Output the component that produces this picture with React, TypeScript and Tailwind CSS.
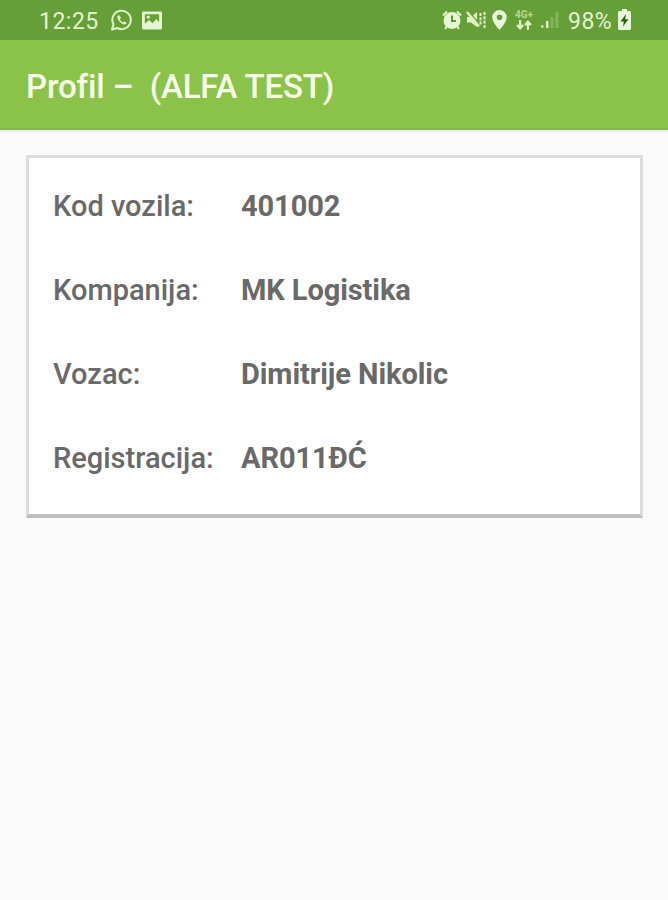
import React from "react";

const rows = [
  { label: "Kod vozila:", value: "401002" },
  { label: "Kompanija:", value: "MK Logistika" },
  { label: "Vozac:", value: "Dimitrije Nikolic" },
  { label: "Registracija:", value: "AR011ĐĆ" },
];

function WhatsAppIcon() {
  return (
    <svg className="ml-[10px] h-[24px] w-[24px]" viewBox="0 0 24 24" fill="none" stroke="#dff3c6">
      <path d="M2 21.5l1.5-5.2A9.2 9.2 0 1 1 7.2 20z" strokeWidth="2" strokeLinejoin="round" />
      <path
        d="M8.2 7.2c-2 1.6-.6 4.4 1.7 6.7 2.2 2.2 4.9 3.5 6.5 1.5l-.1-1-2.2-1.1-1.2 1.1c-1.4-.6-2.5-1.7-3.1-3.1l1-1.2-1-2.7z"
        fill="#dff3c6"
        stroke="none"
      />
    </svg>
  );
}

function PictureIcon() {
  return (
    <svg className="ml-[8px] h-[19px] w-[20px]" viewBox="0 0 21 19">
      <path
        fillRule="evenodd"
        fill="#e6f6d2"
        d="M1.5 0h18A1.5 1.5 0 0 1 21 1.5v16a1.5 1.5 0 0 1-1.5 1.5h-18A1.5 1.5 0 0 1 0 17.5v-16A1.5 1.5 0 0 1 1.5 0zM3 3v10l4.500-4 3.500 3.500 4-4.500 3 3V3zM5 4.500h3v3H5z"
      />
    </svg>
  );
}

function AlarmIcon() {
  return (
    <svg className="h-[20px] w-[20px]" viewBox="0 0 20 20" fill="none">
      <circle cx="10" cy="10.5" r="8.5" fill="#e6f6d2" />
      <path d="M1 5.5L5 1.5M19 5.5L15 1.5M5 16l-2 3M15 16l2 3" stroke="#e6f6d2" strokeWidth="2" />
      <path d="M10 5.5v5.5h4" stroke="#5f9a35" strokeWidth="2" />
    </svg>
  );
}

function VibrateMuteIcon() {
  return (
    <svg className="ml-[4px] h-[20px] w-[20px]" viewBox="0 0 20 20" fill="none">
      <path d="M1 7h4l6-5v15l-6-4.5H1z" fill="#dff3c6" />
      <path d="M3 2L13 13.500" stroke="#649f37" strokeWidth="1.5" />
      <path d="M1 2L13 16.500" stroke="#dff3c6" strokeWidth="2.4" />
      <path d="M14.500 3v12M18.500 2v16" stroke="#dff3c6" strokeWidth="2" strokeDasharray="3 1.3" />
    </svg>
  );
}

function PinIcon() {
  return (
    <svg className="ml-[6px] h-[20px] w-[15px]" viewBox="0 0 15 20">
      <path
        fillRule="evenodd"
        fill="#e9f8d8"
        d="M7.5 0A7.3 7.3 0 0 0 .2 7.3C.2 12.5 7.5 20 7.5 20s7.3-7.5 7.3-12.7A7.3 7.3 0 0 0 7.5 0zm0 4.500a2.800 2.800 0 1 1 0 5.600 2.800 2.800 0 0 1 0-5.600z"
      />
    </svg>
  );
}

function NetworkIcon() {
  return (
    <div className="ml-[7px] flex h-[20px] w-[20px] flex-col items-center">
      <span className="text-[10px] leading-[10px] font-bold text-[#b5d990]">4G+</span>
      <svg className="h-[10px] w-[16px] shrink-0" viewBox="0 0 14 9" fill="none" stroke="#dff3c6" strokeWidth="2">
        <path d="M3.5 0v7M.8 4.5l2.700 3 2.700-3M10.500 9V2M7.800 4.500l2.700-3 2.700 3" />
      </svg>
    </div>
  );
}

function SignalIcon() {
  return (
    <svg className="ml-[6px] h-[18px] w-[19px]" viewBox="0 0 19 18">
      <rect x="1" y="14" width="2.5" height="3" fill="#b9dc97" />
      <rect x="6" y="10" width="2.5" height="7" fill="#dff3c6" />
      <rect x="10.5" y="6" width="3" height="11" fill="#84b65c" />
      <rect x="15.5" y="1" width="3" height="16" fill="#84b65c" />
    </svg>
  );
}

function BatteryIcon() {
  return (
    <svg className="mb-[2px] ml-[5px] h-[21px] w-[13px]" viewBox="0 0 13 21">
      <path d="M4 0h5v2h2.5A1.5 1.5 0 0 1 13 3.5v16a1.5 1.5 0 0 1-1.5 1.5h-10A1.5 1.5 0 0 1 0 19.5v-16A1.5 1.5 0 0 1 1.5 2H4z" fill="#e9f8d8" />
      <path d="M8 5l-5.500 7.500h3.300L5 17.500l5.500-7.300H7.200z" fill="#2f5f17" />
    </svg>
  );
}

export default function App() {
  return (
    <div className="flex h-[900px] w-[668px] flex-col overflow-hidden bg-[#fafafa] font-[Roboto,sans-serif]">
      <div className="flex h-10 shrink-0 items-center justify-between bg-[#669f38] pr-[37px] pl-[39px] text-[#e3f4cf]">
        <div className="flex items-center">
          <span className="w-[61px] pt-[3px] text-[23px] leading-none tracking-[0.5px] whitespace-nowrap">12:25</span>
          <WhatsAppIcon />
          <PictureIcon />
        </div>
        <div className="flex items-center">
          <AlarmIcon />
          <VibrateMuteIcon />
          <PinIcon />
          <NetworkIcon />
          <SignalIcon />
          <span className="ml-[9px] w-[45px] pt-[3px] text-[23px] leading-none tracking-[0.5px] whitespace-nowrap">98%</span>
          <BatteryIcon />
        </div>
      </div>
      <header className="flex h-[90px] shrink-0 items-center border-b-2 border-[#83b653] bg-[#8bc34a] pt-[5px] pl-[26px] shadow-[0_1px_3px_rgba(0,0,0,0.12)]">
        <h1 className="text-[33px] leading-none font-medium tracking-[-0.16px] whitespace-pre text-[#f8ffe9]">{"Profil –  (ALFA TEST)"}</h1>
      </header>
      <main className="mt-[25px] mr-[25px] ml-[26px] h-[363px] border-[3px] border-b-4 border-[#dcdcdc] border-b-[#bfbfbf] bg-white pt-[6px] pl-6">
        {rows.map((row) => (
          <div key={row.label} className="flex h-[84px] items-center text-[29px] leading-none whitespace-nowrap text-[#696969]">
            <span className="w-[188px] font-medium">{row.label}</span>
            <span className="font-bold tracking-[-0.08px]">{row.value}</span>
          </div>
        ))}
      </main>
    </div>
  );
}
